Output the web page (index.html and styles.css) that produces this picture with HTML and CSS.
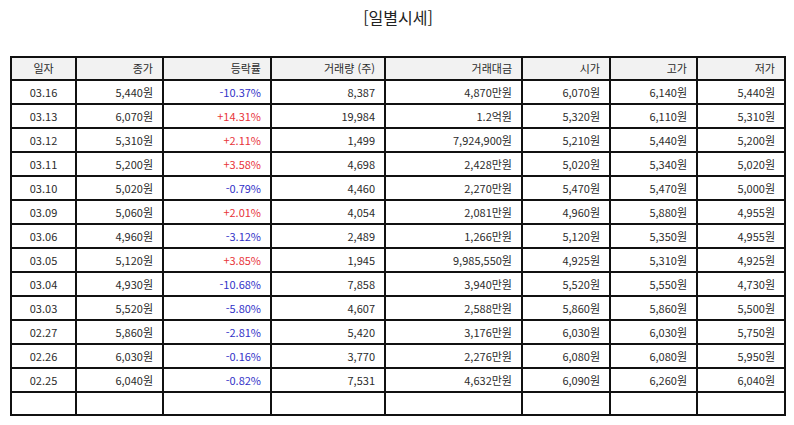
FILE: index.html
```html
<!DOCTYPE html>
<html lang="ko">
<head>
<meta charset="utf-8">
<link rel="stylesheet" href="styles.css">
</head>
<body>
<div class="page">
  <h1 class="title">[일별시세]</h1>
  <table class="grid">
    <colgroup>
      <col class="c1"><col class="c2"><col class="c3"><col class="c4"><col class="c5"><col class="c6"><col class="c7"><col class="c8">
    </colgroup>
    <thead>
      <tr><th class="center">일자</th><th>종가</th><th>등락률</th><th>거래량 (주)</th><th>거래대금</th><th>시가</th><th>고가</th><th>저가</th></tr>
    </thead>
    <tbody>
      <tr><td class="center">03.16</td><td>5,440원</td><td class="down">-10.37%</td><td>8,387</td><td>4,870만원</td><td>6,070원</td><td>6,140원</td><td>5,440원</td></tr>
      <tr><td class="center">03.13</td><td>6,070원</td><td class="up">+14.31%</td><td>19,984</td><td>1.2억원</td><td>5,320원</td><td>6,110원</td><td>5,310원</td></tr>
      <tr><td class="center">03.12</td><td>5,310원</td><td class="up">+2.11%</td><td>1,499</td><td>7,924,900원</td><td>5,210원</td><td>5,440원</td><td>5,200원</td></tr>
      <tr><td class="center">03.11</td><td>5,200원</td><td class="up">+3.58%</td><td>4,698</td><td>2,428만원</td><td>5,020원</td><td>5,340원</td><td>5,020원</td></tr>
      <tr><td class="center">03.10</td><td>5,020원</td><td class="down">-0.79%</td><td>4,460</td><td>2,270만원</td><td>5,470원</td><td>5,470원</td><td>5,000원</td></tr>
      <tr><td class="center">03.09</td><td>5,060원</td><td class="up">+2.01%</td><td>4,054</td><td>2,081만원</td><td>4,960원</td><td>5,880원</td><td>4,955원</td></tr>
      <tr><td class="center">03.06</td><td>4,960원</td><td class="down">-3.12%</td><td>2,489</td><td>1,266만원</td><td>5,120원</td><td>5,350원</td><td>4,955원</td></tr>
      <tr><td class="center">03.05</td><td>5,120원</td><td class="up">+3.85%</td><td>1,945</td><td>9,985,550원</td><td>4,925원</td><td>5,310원</td><td>4,925원</td></tr>
      <tr><td class="center">03.04</td><td>4,930원</td><td class="down">-10.68%</td><td>7,858</td><td>3,940만원</td><td>5,520원</td><td>5,550원</td><td>4,730원</td></tr>
      <tr><td class="center">03.03</td><td>5,520원</td><td class="down">-5.80%</td><td>4,607</td><td>2,588만원</td><td>5,860원</td><td>5,860원</td><td>5,500원</td></tr>
      <tr><td class="center">02.27</td><td>5,860원</td><td class="down">-2.81%</td><td>5,420</td><td>3,176만원</td><td>6,030원</td><td>6,030원</td><td>5,750원</td></tr>
      <tr><td class="center">02.26</td><td>6,030원</td><td class="down">-0.16%</td><td>3,770</td><td>2,276만원</td><td>6,080원</td><td>6,080원</td><td>5,950원</td></tr>
      <tr><td class="center">02.25</td><td>6,040원</td><td class="down">-0.82%</td><td>7,531</td><td>4,632만원</td><td>6,090원</td><td>6,260원</td><td>6,040원</td></tr>
      <tr class="empty"><td></td><td></td><td></td><td></td><td></td><td></td><td></td><td></td></tr>
    </tbody>
  </table>
</div>
</body>
</html>
```

FILE: styles.css
```css
html, body {
  margin: 0;
  padding: 0;
  background: #ffffff;
}

.page {
  padding: 0 8px 0 10px;
  font-family: "Noto Sans CJK KR", "Noto Sans", sans-serif;
  color: #2b2b2b;
}

.title {
  margin: 0;
  padding-top: 5px;
  height: 56px;
  box-sizing: border-box;
  text-align: center;
  font-size: 16px;
  font-weight: 400;
  line-height: 24px;
  color: #222;
}

.grid {
  width: 776px;
  table-layout: fixed;
  border-collapse: separate;
  border-spacing: 0;
  border: 1px solid #111;
  font-size: 11px;
}

.c1 { width: 65px; }
.c2 { width: 87px; }
.c3 { width: 108px; }
.c4 { width: 114px; }
.c5 { width: 137px; }
.c6 { width: 88px; }
.c7 { width: 87px; }
.c8 { width: 88px; }

.grid th,
.grid td {
  box-sizing: border-box;
  border: 1px solid #111;
  padding: 0 9px 0 6px;
  text-align: right;
  font-weight: 400;
  white-space: nowrap;
}

.grid th {
  height: 23px;
  line-height: 21px;
  background: #f2f2f2;
}

.grid td {
  height: 24px;
  line-height: 22px;
}

.grid tr.empty td {
  height: 23px;
}

.grid .center {
  text-align: center;
  padding: 0;
}

.up { color: #e8343a; }
.down { color: #3232c8; }
```
